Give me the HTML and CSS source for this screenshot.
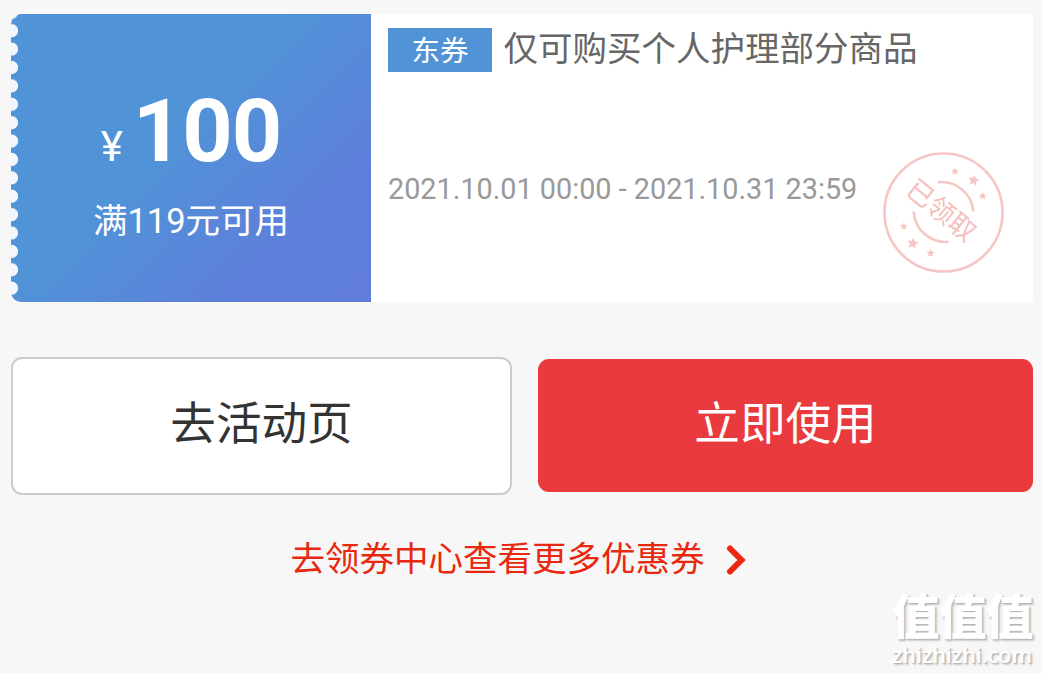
FILE: index.html
```html
<!doctype html>
<html lang="zh-CN">
  <head>
    <meta charset="UTF-8" />
    <meta name="viewport" content="width=device-width, initial-scale=1.0" />
    <title>优惠券</title>
    <link rel="stylesheet" href="styles.css">
  </head>
  <body>
    <div class="page">
      <div class="coupon">
        <div class="coupon-left">
          <div class="price"><span class="unit">¥</span><strong>100</strong></div>
          <div class="limit">满119元可用</div>
        </div>
        <div class="coupon-right">
          <div class="coupon-title">
            <span class="tag">东券</span>
            <span class="name">仅可购买个人护理部分商品</span>
          </div>
          <div class="date">2021.10.01 00:00 - 2021.10.31 23:59</div>
          <svg class="stamp" width="121" height="121" viewBox="0 0 122 122">
            <defs>
              <path id="star" d="M0 -6 L1.8 -2.2 L6 -1.8 L2.8 1 L3.7 5.2 L0 3 L-3.7 5.2 L-2.8 1 L-6 -1.8 L-1.8 -2.2 Z" />
            </defs>
            <g class="stamp-lines">
              <circle cx="61" cy="61" r="59.5" />
              <path d="M55.500 30.500 A32 32 0 0 1 91 60" />
              <path d="M31 60 A32 32 0 0 0 66 90.500" />
            </g>
            <g class="stamp-stars">
              <use href="#star" transform="translate(72.500 19.500) scale(.65)" />
              <use href="#star" transform="translate(91.500 28.500) rotate(10) scale(.95)" />
              <use href="#star" transform="translate(100.500 44.500) scale(.65)" />
              <use href="#star" transform="translate(21 75) scale(.65)" />
              <use href="#star" transform="translate(30 92) rotate(10) scale(.95)" />
              <use href="#star" transform="translate(48 102) scale(.7)" />
            </g>
            <text x="58.500" y="69.500" transform="rotate(39 60 60)">已领取</text>
          </svg>
        </div>
      </div>

      <div class="buttons">
        <a class="btn btn-plain">去活动页</a>
        <a class="btn btn-red">立即使用</a>
      </div>

      <a class="more">
        <span>去领券中心查看更多优惠券</span>
        <svg width="20" height="32" viewBox="0 0 20 32">
          <path d="M4 4.500 L15.500 16 L4 27.500" />
        </svg>
      </a>
    </div>

    <div class="watermark">
      <div class="watermark-name">值值值</div>
      <div class="watermark-url">zhizhizhi.com</div>
    </div>
  </body>
</html>
```
FILE: styles.css
```css
* {
  margin: 0;
  padding: 0;
  box-sizing: border-box;
}

body {
  font-family: Roboto, "Noto Sans CJK SC", sans-serif;
  background: #f7f7f7;
  height: 673px;
  overflow: hidden;
  position: relative;
}

.page {
  padding: 14px 9px 0 11px;
}

.coupon {
  display: flex;
  height: 288px;
  background: linear-gradient(90deg, transparent 10px, #fff 10px);
}

.coupon-left {
  width: 360px;
  padding-top: 67px;
  border-radius: 10px 0 0 10px;
  color: #fff;
  text-align: center;
  /* punched holes down the left edge, then the blue fill */
  background:
    radial-gradient(circle at 0.5px 50%, #f1f7fd 6.2px, transparent 7px) 0 7.5px / 8px 18.4px repeat-y,
    linear-gradient(135deg, #5093d7 0%, #5093d7 43%, #5f7edb 80%, #5f7dd9 100%);
}

.price {
  height: 100px;
  line-height: 100px;
  white-space: nowrap;
}

.unit {
  font-size: 42px;
  margin-right: 10px;
}

.price strong {
  font-size: 88px;
  font-weight: bold;
  letter-spacing: -1px;
}

.limit {
  margin-top: 15px;
  line-height: 50px;
  font-size: 34.5px;
}

.coupon-right {
  flex: 1;
  position: relative;
  padding: 14px 0 0 17px;
}

.coupon-title {
  display: flex;
  height: 44px;
}

.tag {
  width: 104px;
  background: #5093d7;
  color: #fff;
  font-size: 28.5px;
  line-height: 48px;
  text-align: center;
}

.name {
  margin-left: 11.5px;
  color: #666;
  font-size: 34.5px;
  line-height: 42px;
  white-space: nowrap;
}

.date {
  margin-top: 97px;
  color: #999;
  font-size: 28.8px;
  line-height: 40px;
  white-space: nowrap;
}

.stamp {
  position: absolute;
  right: 29px;
  top: 138px;
}

.stamp-lines {
  fill: none;
  stroke: #f6c6c5;
  stroke-width: 2.6;
}

.stamp-stars {
  fill: #f6c4c3;
}

.stamp text {
  fill: #f5bfbe;
  font-size: 27px;
  text-anchor: middle;
}

.buttons {
  display: flex;
  align-items: flex-start;
  gap: 26px;
  margin-top: 55px;
}

.btn {
  border-radius: 11px;
  font-size: 45.6px;
  text-align: center;
}

.btn-plain {
  width: 501px;
  height: 138px;
  line-height: 132px;
  border: 2px solid #ccc;
  background: #fff;
  color: #333;
}

.btn-red {
  width: 495px;
  height: 133px;
  margin-top: 2px;
  line-height: 131px;
  background: #e93b3d;
  color: #fff;
}

.more {
  display: flex;
  justify-content: center;
  align-items: center;
  gap: 21px;
  height: 50px;
  margin-top: 40px;
  padding-right: 8px;
  color: #e9290f;
  font-size: 34.5px;
  line-height: 50px;
}

.more span {
  margin-top: -2px;
}

.more path {
  fill: none;
  stroke: #ee2711;
  stroke-width: 6;
  stroke-linecap: round;
  stroke-linejoin: miter;
}

.watermark {
  position: absolute;
  right: 9px;
  bottom: 6px;
  width: 142px;
  color: #fff;
  text-align: center;
  text-shadow: 1px 1px 1px #b5b5b5, 2px 2px 2px #c8c8c8;
}

.watermark-name {
  font-family: "Noto Sans CJK SC", sans-serif;
  font-size: 48px;
  font-weight: 900;
  line-height: 52px;
  letter-spacing: -1px;
  margin-bottom: 4px;
  white-space: nowrap;
}

.watermark-url {
  font-family: "Open Sans", sans-serif;
  font-size: 21.5px;
  font-weight: 600;
  line-height: 24px;
}
```
